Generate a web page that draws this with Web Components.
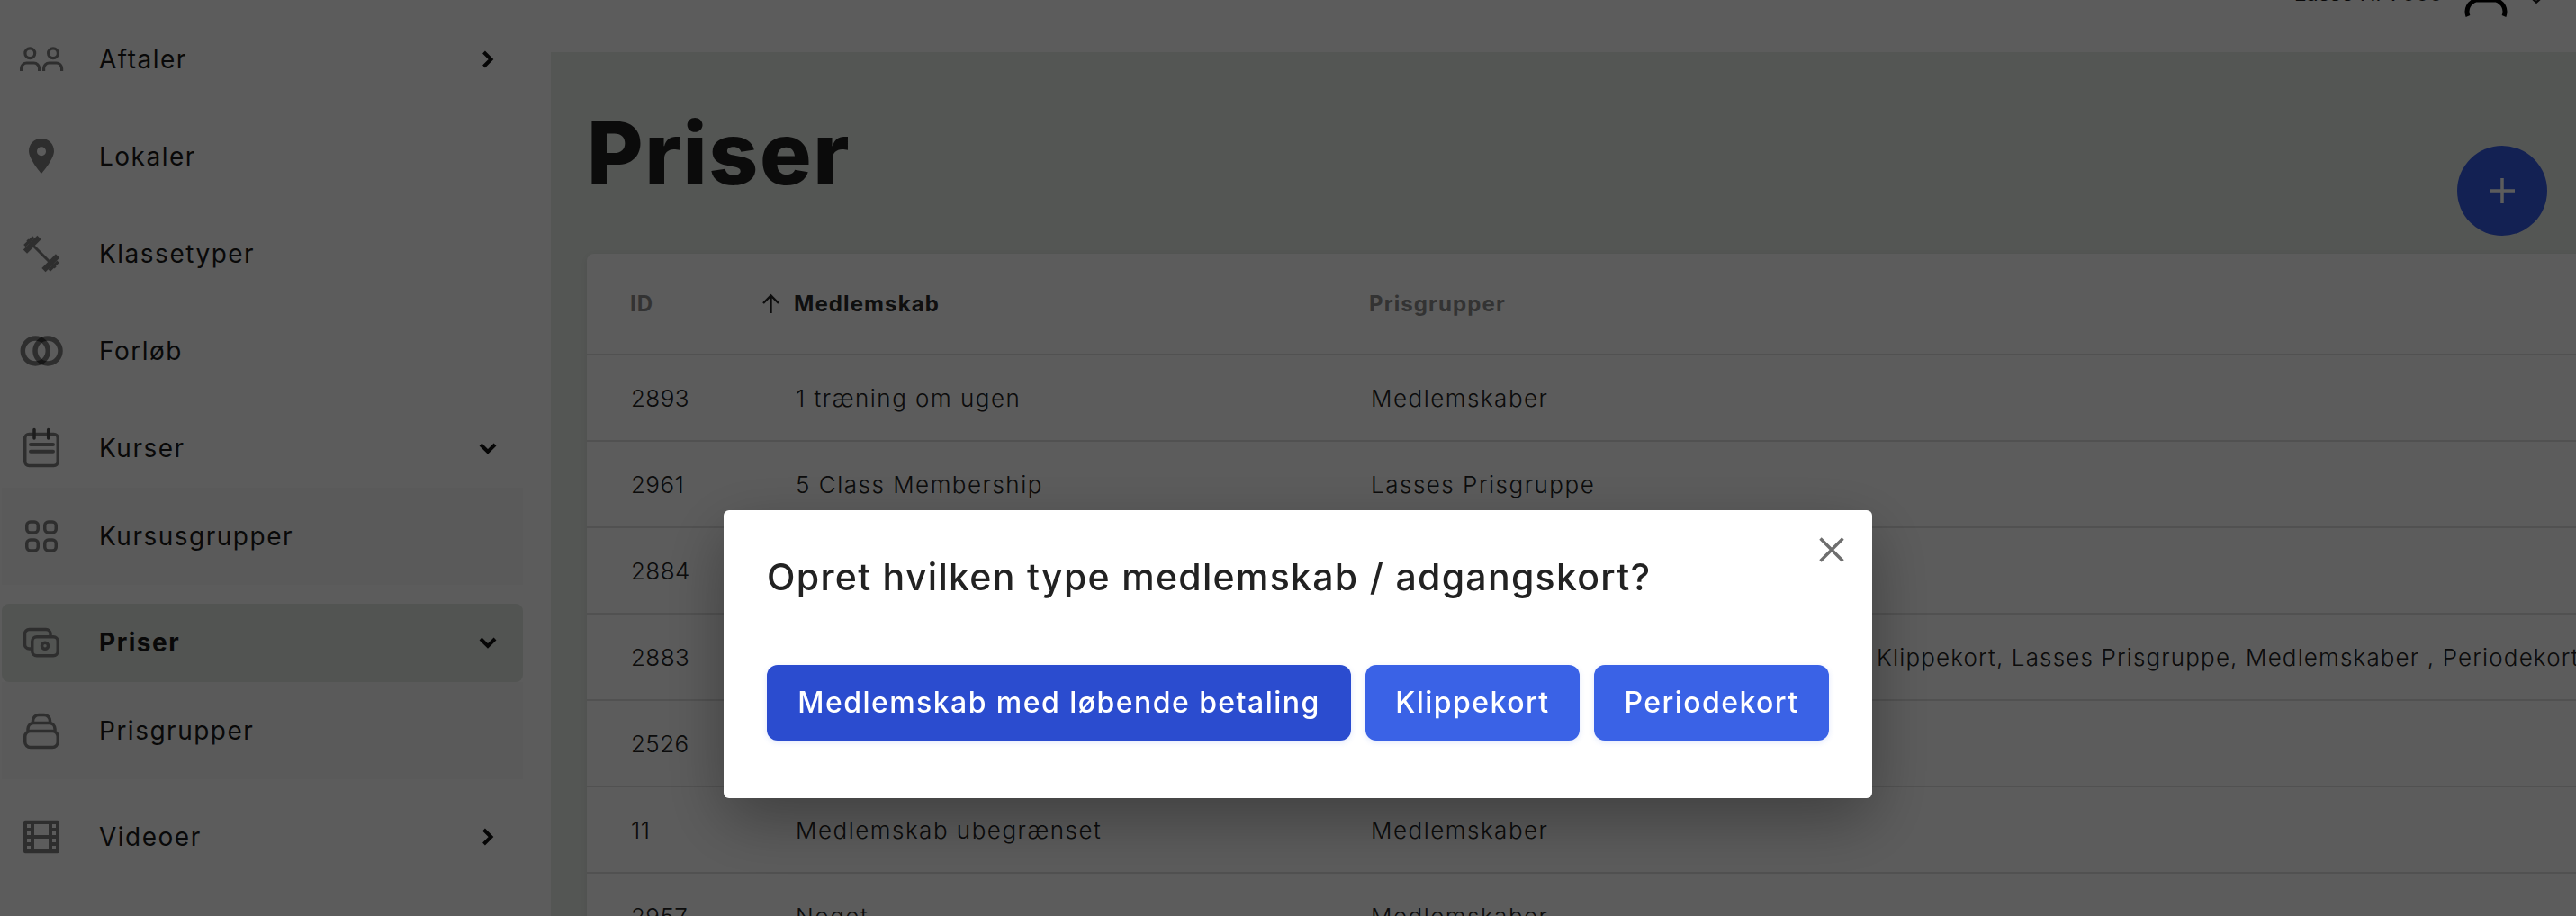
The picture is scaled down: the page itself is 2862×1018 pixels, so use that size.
<!DOCTYPE html>
<html lang="da">
<head>
<meta charset="utf-8">
<title>Priser</title>
<style>
  html, body { margin: 0; height: 1018px; overflow: hidden; background: #fff; }
  body { font-family: Inter, "Noto Sans", sans-serif; }
</style>
</head>
<body>
<app-shell>
  <side-nav slot="nav">
    <nav-item label="Aftaler" icon="people" chevron="right"></nav-item>
    <nav-item label="Lokaler" icon="pin"></nav-item>
    <nav-item label="Klassetyper" icon="barbell"></nav-item>
    <nav-item label="Forløb" icon="rings"></nav-item>
    <nav-item label="Kurser" icon="calendar" chevron="down"></nav-item>
    <nav-item label="Kursusgrupper" icon="grid" sub></nav-item>
    <nav-item label="Priser" icon="money" chevron="down" active></nav-item>
    <nav-item label="Prisgrupper" icon="stack" sub></nav-item>
    <nav-item label="Videoer" icon="film" chevron="right"></nav-item>
  </side-nav>
  <top-bar slot="top" user="Lasse Hr 7000"></top-bar>
  <page-head title="Priser"></page-head>
  <price-table>
    <price-row id-text="2893" name="1 træning om ugen" groups="Medlemskaber"></price-row>
    <price-row id-text="2961" name="5 Class Membership" groups="Lasses Prisgruppe"></price-row>
    <price-row id-text="2884"></price-row>
    <price-row id-text="2883" groups="Klippekort, Lasses Prisgruppe, Medlemskaber , Periodekort" offset="562" tight></price-row>
    <price-row id-text="2526"></price-row>
    <price-row id-text="11" name="Medlemskab ubegrænset" groups="Medlemskaber"></price-row>
    <price-row id-text="2957" name="Noget" groups="Medlemskaber"></price-row>
  </price-table>
</app-shell>
<price-dialog title="Opret hvilken type medlemskab / adgangskort?">
  <dialog-button dark style="width:649px">Medlemskab med løbende betaling</dialog-button>
  <dialog-button style="width:238px">Klippekort</dialog-button>
  <dialog-button style="width:261px">Periodekort</dialog-button>
</price-dialog>

<script>
// icons are drawn on a 60x60 box
const ICONS = {
  people: `<g fill="none" stroke="currentColor" stroke-width="3.2">
    <circle cx="17.3" cy="23.3" r="5.4"/><circle cx="43" cy="23.3" r="5.4"/>
    <path d="M7.6 43v-3a6 6 0 0 1 6-6h8a6 6 0 0 1 6 6v3"/><path d="M32.6 43v-3a6 6 0 0 1 6-6h8a6 6 0 0 1 6 6v3"/></g>`,
  pin: `<path fill="currentColor" fill-rule="evenodd" d="M30 10C22 10 16 16 16 24C16 33 30 49 30 49C30 49 44 33 44 24C44 16 38 10 30 10ZM30 19.3a5 5 0 1 1 0 10a5 5 0 1 1 0-10Z"/>`,
  barbell: `<g fill="currentColor" transform="rotate(45 30 30)">
    <rect x="8" y="28.5" width="44" height="3"/>
    <rect x="12.5" y="19" width="6" height="22"/><rect x="9" y="23" width="3.5" height="14"/>
    <rect x="41.5" y="19" width="6" height="22"/><rect x="47.5" y="23" width="3.5" height="14"/></g>`,
  rings: `<g fill="none" stroke="#000" stroke-opacity=".5" stroke-width="5.5"><circle cx="23.3" cy="30" r="14"/><circle cx="37" cy="30" r="14"/></g>`,
  calendar: `<g fill="none" stroke="currentColor" stroke-width="3.5" stroke-linecap="round">
    <rect x="11.75" y="14.5" width="36.5" height="35" rx="4.5"/>
    <path stroke="#505050" d="M22 9.5V19M37.7 9.5V19"/>
    <path stroke-width="4" d="M18 26H43M18 33.7H43"/></g>`,
  grid: `<g fill="none" stroke="currentColor" stroke-width="3.5">
    <rect x="13.75" y="14" width="12.5" height="12" rx="4"/><rect x="33.75" y="14" width="12.5" height="12" rx="4"/>
    <rect x="13.75" y="34" width="12.5" height="12" rx="4"/><rect x="33.75" y="34" width="12.5" height="12" rx="4"/></g>`,
  money: `<g fill="none" stroke="currentColor" stroke-width="3.5">
    <path d="M18 37H16.5a5 5 0 0 1-5-5V20.5a5 5 0 0 1 5-5H35a5 5 0 0 1 5 5V23"/>
    <rect x="19.75" y="23.75" width="28.5" height="21" rx="5"/><circle cx="34" cy="33.7" r="3.5"/></g>`,
  stack: `<g fill="none" stroke="currentColor" stroke-width="3.5">
    <rect x="11.75" y="30.5" width="36.5" height="18" rx="6"/>
    <path d="M15 30v-2a6.5 6.5 0 0 1 6-6.5H39a6.5 6.5 0 0 1 6 6.5v2"/>
    <path d="M20.5 21v-2a6.5 6.5 0 0 1 6.5-6.5h6a6.5 6.5 0 0 1 6.5 6.5v2"/></g>`,
  film: `<path fill="currentColor" fill-rule="evenodd" d="M12 11.7H48a2 2 0 0 1 2 2V46.3a2 2 0 0 1-2 2H12a2 2 0 0 1-2-2V13.7a2 2 0 0 1 2-2Z
    M14 16h4v4h-4ZM14 24h4v4h-4ZM14 32h4v4h-4ZM14 40h4v4h-4Z
    M42 16h4v4h-4ZM42 24h4v4h-4ZM42 32h4v4h-4ZM42 40h4v4h-4Z
    M22 16h16v12H22ZM22 32h16v12H22Z"/>`
};

const CHEVRONS = {
  right: `<svg width="24" height="24" viewBox="0 0 24 24"><path d="M7.5 4L15.5 12L7.5 20" fill="none" stroke="#111" stroke-width="4"/></svg>`,
  down: `<svg width="24" height="24" viewBox="0 0 24 24"><path d="M4 8L12 16L20 8" fill="none" stroke="#111" stroke-width="4"/></svg>`
};

class AppShell extends HTMLElement {
  constructor() {
    super();
    this.attachShadow({ mode: 'open' });
    this.shadowRoot.innerHTML = `
    <style>
      :host { display: grid; grid-template-columns: 612px 1fr; width: 2862px; height: 1018px; overflow: hidden; background: #fff; }
      .right { display: flex; flex-direction: column; min-width: 0; }
      main { flex: 1; background: #e9eee9; padding-left: 40px; }
    </style>
    <slot name="nav"></slot>
    <div class="right">
      <slot name="top"></slot>
      <main><slot></slot></main>
    </div>`;
  }
}

class SideNav extends HTMLElement {
  constructor() {
    super();
    this.attachShadow({ mode: 'open' });
    this.shadowRoot.innerHTML = `
    <style>
      :host { display: flex; flex-direction: column; gap: 21px; padding: 22.5px 31px 0 2px; box-sizing: border-box; height: 1018px; }
    </style>
    <slot></slot>`;
  }
}

class NavItem extends HTMLElement {
  constructor() {
    super();
    this.attachShadow({ mode: 'open' });
    const chevron = CHEVRONS[this.getAttribute('chevron')] || '';
    this.shadowRoot.innerHTML = `
    <style>
      :host { display: flex; align-items: center; height: 87px; padding-left: 14px; padding-right: 27px; border-radius: 8px; color: #1a1a1a; font-size: 28px; letter-spacing: 1.5px; }
      :host([active]) { background: #e3e8e3; font-weight: 700; }
      :host([sub]) { height: 108px; margin-top: -21px; background: #fafafa; border-radius: 0; }
      svg.icon { width: 60px; height: 60px; color: #808080; flex: none; margin-right: 34px; }
      .label { flex: 1; }
      .chev { display: flex; }
    </style>
    <svg class="icon" viewBox="0 0 60 60">${ICONS[this.getAttribute('icon')] || ''}</svg>
    <span class="label">${this.getAttribute('label')}</span>
    <span class="chev">${chevron}</span>`;
  }
}

class TopBar extends HTMLElement {
  constructor() {
    super();
    this.attachShadow({ mode: 'open' });
    this.shadowRoot.innerHTML = `
    <style>
      :host { display: flex; justify-content: flex-end; height: 58px; overflow: hidden; color: #1a1a1a; font-size: 24px; padding-right: 38px; box-sizing: border-box; }
      .user { margin-top: -23px; line-height: 32px; height: 32px; margin-right: 24px; white-space: nowrap; }
      .avatar { margin-right: 26px; display: block; }
      .arrow { display: block; }
    </style>
    <span class="user">${this.getAttribute('user')}</span>
    <svg class="avatar" width="48" height="20" viewBox="0 0 48 20"><path d="M4 18C1 10 5 3 13 0H35C43 3 47 10 44 18" fill="none" stroke="#000" stroke-width="5"/></svg>
    <svg class="arrow" width="12" height="4" viewBox="0 0 12 4"><path d="M1 -2L6 2.5L11 -2" fill="none" stroke="#1a1a1a" stroke-width="2.5"/></svg>`;
  }
}

class PageHead extends HTMLElement {
  constructor() {
    super();
    this.attachShadow({ mode: 'open' });
    this.shadowRoot.innerHTML = `
    <style>
      :host { display: flex; justify-content: space-between; height: 224px; padding-right: 32px; box-sizing: border-box; }
      h1 { margin: 54px 0 0; font-size: 96px; line-height: 116px; font-weight: 800; color: #1f1f1f; letter-spacing: 1.6px; }
      .fab { width: 100px; height: 100px; margin-top: 104px; border-radius: 50%; background: #375ce6; display: flex; align-items: center; justify-content: center; }
    </style>
    <h1>${this.getAttribute('title')}</h1>
    <div class="fab"><svg width="28" height="28" viewBox="0 0 28 28"><path d="M14 0V28M0 14H28" stroke="#fff" stroke-width="3.5"/></svg></div>`;
    this.removeAttribute('title');
  }
}

class PriceTable extends HTMLElement {
  constructor() {
    super();
    this.attachShadow({ mode: 'open' });
    this.shadowRoot.innerHTML = `
    <style>
      :host { display: block; background: #fff; border-radius: 8px 0 0 0; box-shadow: 0 2px 10px rgba(0,0,0,.08); margin-right: -20px; }
      .head { display: grid; grid-template-columns: 182px 639px 1fr; align-items: center; height: 113px; box-sizing: border-box; padding-left: 48px; border-bottom: 2px solid #e1e1e1; font-size: 24px; font-weight: 700; letter-spacing: 1.1px; color: #8f8f8f; }
      .sorted { color: #2a2a2a; display: flex; align-items: center; margin-left: -42px; }
      .sorted svg { margin-right: 9px; }
    </style>
    <div class="head">
      <span>ID</span>
      <span class="sorted"><svg width="33" height="24" viewBox="0 0 33 24"><path d="M16.5 22V3M8 11L16.5 2.5L25 11" fill="none" stroke="#262626" stroke-width="2.4"/></svg>Medlemskab</span>
      <span>Prisgrupper</span>
    </div>
    <slot></slot>`;
  }
}

class PriceRow extends HTMLElement {
  constructor() {
    super();
    this.attachShadow({ mode: 'open' });
    const offset = this.getAttribute('offset') || 0;
    this.shadowRoot.innerHTML = `
    <style>
      :host { display: grid; grid-template-columns: 182px 639px 1fr; align-items: center; height: 96px; box-sizing: border-box; padding-left: 50px; padding-top: 1px; border-bottom: 2px solid #e1e1e1; font-size: 26px; font-weight: 300; letter-spacing: 1.5px; color: #222; white-space: nowrap; }
      :host([tight]) .groups { letter-spacing: 1.15px; }
      .id { letter-spacing: .4px; margin-left: -1px; }
      .groups { margin-left: ${offset}px; }
    </style>
    <span class="id">${this.getAttribute('id-text')}</span>
    <span>${this.getAttribute('name') || ''}</span>
    <span class="groups">${this.getAttribute('groups') || ''}</span>`;
  }
}

class DialogButton extends HTMLElement {
  constructor() {
    super();
    this.attachShadow({ mode: 'open' });
    this.shadowRoot.innerHTML = `
    <style>
      :host { display: flex; align-items: center; justify-content: center; height: 84px; box-sizing: border-box; padding-bottom: 2px; border-radius: 12px; background: #3a62e6; color: #fff; font-size: 32px; font-weight: 500; letter-spacing: 1.45px; white-space: nowrap; box-shadow: 0 2px 6px rgba(58,98,230,.15); }
      :host([dark]) { background: #2b4ccf; }
    </style>
    <slot></slot>`;
  }
}

class PriceDialog extends HTMLElement {
  constructor() {
    super();
    this.attachShadow({ mode: 'open' });
    this.shadowRoot.innerHTML = `
    <style>
      :host { display: block; position: fixed; inset: 0; background: rgba(0,0,0,.64); }
      .box { position: absolute; left: 804px; top: 567px; width: 1276px; height: 320px; box-sizing: border-box; padding: 44px 0 0 48px; background: #fff; border-radius: 6px; box-shadow: 0 24px 70px rgba(0,0,0,.32); }
      h2 { margin: 0 0 68px; font-size: 41px; line-height: 60px; font-weight: 500; letter-spacing: 1.3px; color: #222; }
      .actions { display: flex; gap: 16px; }
      .close { position: absolute; left: 1217px; top: 30px; display: block; }
    </style>
    <div class="box">
      <svg class="close" width="28" height="28" viewBox="0 0 28 28"><path d="M1.5 1.5L26.5 26.5M26.5 1.5L1.5 26.5" stroke="#6e6e6e" stroke-width="3.4"/></svg>
      <h2>${this.getAttribute('title')}</h2>
      <div class="actions"><slot></slot></div>
    </div>`;
    this.removeAttribute('title');
  }
}

customElements.define('nav-item', NavItem);
customElements.define('side-nav', SideNav);
customElements.define('top-bar', TopBar);
customElements.define('page-head', PageHead);
customElements.define('price-row', PriceRow);
customElements.define('price-table', PriceTable);
customElements.define('dialog-button', DialogButton);
customElements.define('price-dialog', PriceDialog);
customElements.define('app-shell', AppShell);
</script>
</body>
</html>
